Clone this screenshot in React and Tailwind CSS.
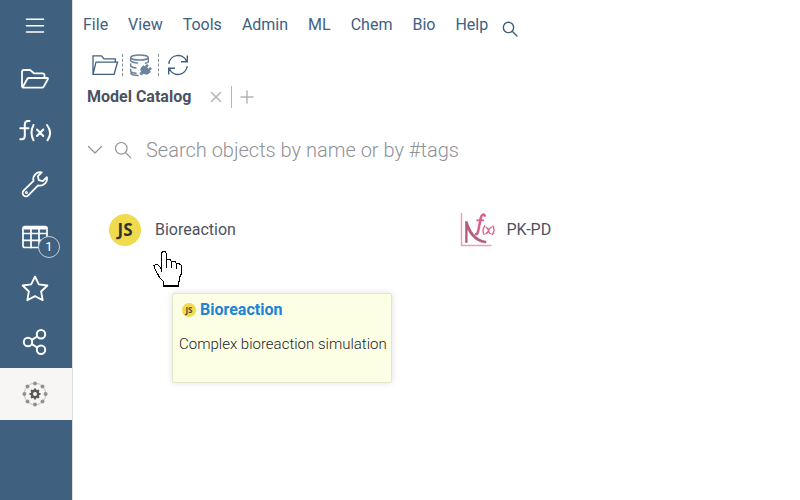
import React from 'react';

function Icon({ className, viewBox, children, strokeWidth = 1.8 }) {
  return (
    <svg
      className={className}
      viewBox={viewBox}
      fill="none"
      stroke="currentColor"
      strokeWidth={strokeWidth}
      strokeLinecap="round"
      strokeLinejoin="round"
      aria-hidden="true"
    >
      {children}
    </svg>
  );
}

function MenuLines() {
  return (
    <Icon className="h-5 w-5" viewBox="0 0 20 20" strokeWidth={1.6}>
      <path d="M1.5 3.3h17M1.5 9.7h17M1.5 16h17" />
    </Icon>
  );
}

function FolderSide() {
  return (
    <Icon className="h-6 w-8" viewBox="0 0 32 24">
      <path d="M3 19.5V5Q3 3 5 3h6l4 3.3h8.5q2 0 2 2V11M3.5 20.5 8.2 12Q8.8 11 10 11h18q1.5 0 .8 1.3L24.8 19.500Q24.2 20.7 23 20.7H4.5Q3 20.7 3 19" />
    </Icon>
  );
}

function FunctionIcon() {
  return (
    <Icon className="h-7 w-9" viewBox="0 0 36 28" strokeWidth={2}>
      <path d="M12.5 4h-1.5Q7.8 4 7.8 7.5v11.2Q7.8 22.3 4.5 22.3H3.2M3.2 11.2h8.3" />
      <path d="M16.5 8Q12.5 15.7 16.5 23.3M30 8Q36 15.7 30.5 23.3" />
      <path d="m20 12.5 6.3 6.5m0-6.500L20 19" />
    </Icon>
  );
}

function WrenchIcon() {
  return (
    <Icon className="h-7 w-7" viewBox="0 0 28 28">
      <path d="M20.800 2.300a7 7 0 0 0-8.300 8.600L2.600 20.600a3.300 3.300 0 0 0 4.700 4.700l9.800-9.900a7 7 0 0 0 8.700-8.300l-4 4-4-.9-.9-4z" />
      <circle cx="5.4" cy="22.6" r=".6" />
    </Icon>
  );
}

function TableIcon() {
  return (
    <Icon className="h-6 w-7" viewBox="0 0 28 24" strokeWidth={1.7}>
      <rect x="2" y="1.5" width="24" height="21" rx="2" />
      <path d="M2 8.5h24M2 15.3h24M10 4v18.5M18 4v18.5" />
      <path d="M3 3h22" strokeWidth="3" />
    </Icon>
  );
}

function StarIcon() {
  return (
    <Icon className="h-7 w-7" viewBox="0 0 28 28">
      <path d="m14 1.5 3.8 7.8 8.6 1.2-6.3 6 1.6 8.700L14 21.100l-7.700 4.100 1.600-8.700-6.300-6 8.600-1.200z" />
    </Icon>
  );
}

function ShareIcon() {
  return (
    <Icon className="h-7 w-7" viewBox="0 0 28 28" strokeWidth={2}>
      <circle cx="7" cy="14" r="4.2" />
      <circle cx="20" cy="6.2" r="4.2" />
      <circle cx="20" cy="21.8" r="4.2" />
      <path d="m10.800 11.800 5.400-3.300m-5.400 7.700 5.400 3.300" />
    </Icon>
  );
}

function HubIcon() {
  return (
    <svg className="h-7 w-7" viewBox="0 0 28 28" fill="none" aria-hidden="true">
      <circle cx="14" cy="14" r="10.8" stroke="#c2c2c2" strokeWidth="1" />
      <g fill="#929292">
        <circle cx="14" cy="3.4" r="2" />
        <circle cx="21.5" cy="6.5" r="2" />
        <circle cx="24.6" cy="14" r="2" />
        <circle cx="21.5" cy="21.5" r="2" />
        <circle cx="14" cy="24.6" r="2" />
        <circle cx="6.5" cy="21.5" r="2" />
        <circle cx="3.4" cy="14" r="2" />
        <circle cx="6.5" cy="6.5" r="2" />
      </g>
      <circle cx="14" cy="14" r="3.2" stroke="#595959" strokeWidth="2.4" />
      <path
        d="M14 8.500v2.200M14 17.300v2.200M8.500 14h2.200M17.300 14h2.200M10.100 10.100l1.600 1.600M16.300 16.300l1.600 1.600M10.100 17.900l1.600-1.600M16.300 11.700l1.600-1.600"
        stroke="#595959"
        strokeWidth="2.2"
      />
    </svg>
  );
}

function FolderTool() {
  return (
    <Icon className="h-6 w-7" viewBox="0 0 28 24" strokeWidth={1.3}>
      <path d="M2 21.300V2.800h8.500l2.500 3h11.300v3.400M2 21.300 5 9.200h21.500l-3.400 12.100z" strokeLinejoin="miter" />
    </Icon>
  );
}

function DatabaseTool() {
  return (
    <Icon className="h-6 w-6" viewBox="0 0 24 24" strokeWidth={1.5}>
      <g stroke="#6b849b">
        <ellipse cx="11.5" cy="4.5" rx="8.8" ry="2.6" />
        <path d="M2.700 4.500v3.300q1.800 2 6.800 2.200M20.300 4.500V9q-1 .8-2.800 1.200M2.700 11v2q1.200 1.600 5.300 1.900M2.700 16.300v2q1 1.600 5.300 1.900M2.700 20.300q1.600 2.200 7.300 2.200" />
      </g>
      <path
        d="m12 20.200 1.500-1.200q-1.800-3.500.8-5.200l1-1 1.500 1 2-2.300 1.500 1-1.500 2.200 1.500 1.300 2-1.500 1.200 1.200-2 2 .8 1.300q-2.800 3.500-6.700 1.500l-2.100 1.200z"
        fill="#6b849b"
        stroke="#6b849b"
        strokeWidth="1"
      />
    </Icon>
  );
}

function RefreshTool() {
  return (
    <Icon className="h-6 w-6" viewBox="0 0 24 24" strokeWidth={1.4}>
      <path
        d="M2.800 10.800A9.300 9.300 0 0 1 20.500 8M21.200 13.200A9.300 9.300 0 0 1 3.500 16M21.300 2.500v6.300h-6.300M2.700 21.500v-6.300H9"
        strokeLinecap="butt"
        strokeLinejoin="miter"
      />
    </Icon>
  );
}

function SearchGlyph({ className, strokeWidth }) {
  return (
    <Icon className={className} viewBox="0 0 18 18" strokeWidth={strokeWidth}>
      <circle cx="7.3" cy="7.3" r="5.8" />
      <path d="m11.5 11.5 5.3 5.3" />
    </Icon>
  );
}

function JsBadge({ large }) {
  return (
    <span
      className={
        large
          ? 'flex h-8 w-8 shrink-0 items-center justify-center rounded-full bg-[#f0db4f] font-["Open_Sans",sans-serif] text-[17px] font-bold text-[#323330]'
          : 'flex h-3.5 w-3.5 shrink-0 items-center justify-center rounded-full bg-[#f0db4f] font-["Open_Sans",sans-serif] text-[8px] font-bold text-[#4e4a30]'
      }
    >
      JS
    </span>
  );
}

function CurveIcon() {
  return (
    <svg className="h-9 w-9 shrink-0" viewBox="0 0 36 36" fill="none" aria-hidden="true">
      <path d="M2.500 1v32.500H32.500" stroke="#e2a5bb" strokeWidth="1.500" />
      <path d="M6.500 9.500 8.300 9.500C11 19 16.500 27.500 27 29.300V31C17.500 30.500 11.500 23.500 8.200 16.500V30.500H6.500z" fill="#b05a7c" stroke="#b05a7c" strokeWidth=".6" />
      <path d="M25.800 3.700c-.8-2-3.200-1.500-4 2L19.500 17.500c-.6 3.500-1.500 5-2.600 4.500" stroke="#dc5f89" strokeWidth="2.500" strokeLinecap="round" />
      <path d="M17.500 8.300h7.500" stroke="#dc5f89" strokeWidth="1.800" />
      <path d="M26 13.500q-3.500 4.800-.8 9.500M33.500 13.500q3.500 4.800-.5 9.500M26.800 15.300q2 0 2.600 3.200t2.900 3.200M32.800 15.300q-2.300 0-3.300 3.200t-3.200 3.200" stroke="#dc5f89" strokeWidth="1.300" />
    </svg>
  );
}

function HandPointer() {
  return (
    <svg className="absolute left-[80px] top-[249px] h-[38px] w-[30px]" viewBox="0 0 30 38" shapeRendering="crispEdges" aria-hidden="true">
      <path
        d="M8.500 22.500V4.500L9.500 2.500H12L13.500 4.500V11.500L15 10.500H17L18.500 12.500H22L23.500 14.500H26L28.500 16.500V24.500L26.500 28.500V31.500L25.500 33.500V36.500H10.500V32.500L6.500 28.500L4.500 24.500L1.500 19.500L1 16.500L2.500 15.500H4.500L6.500 17.500L8.500 20.500"
        fill="#fff"
        stroke="#000"
        strokeWidth="1"
      />
      <path d="M13.500 11v8M18.500 12v7M23.500 14v6" stroke="#000" />
      <path d="M10 37h16" stroke="#000" strokeWidth="2" />
    </svg>
  );
}

const sideItems = [
  ['Toggle menu', MenuLines],
  ['Browse files', FolderSide],
  ['Functions', FunctionIcon],
  ['Tools', WrenchIcon],
  ['Tables', TableIcon],
  ['Favorites', StarIcon],
  ['Share', ShareIcon],
];

const menus = ['File', 'View', 'Tools', 'Admin', 'ML', 'Chem', 'Bio', 'Help'];

export default function App() {
  return (
    <div className="flex min-h-screen bg-white font-[Roboto,sans-serif] text-base text-[#4d5261]">
      <nav aria-label="Sidebar" className="w-[73px] shrink-0 border-r border-[#dbdcdf] bg-[#40607f] text-white">
        <div className="grid h-[368px] grid-rows-7">
          {sideItems.map(([label, Glyph]) => (
            <button key={label} aria-label={label} className="relative flex items-center justify-center pr-[3px]">
              <Glyph />
              {label === 'Tables' && (
                <span className="absolute bottom-[5px] left-[38px] flex h-[22px] w-[22px] items-center justify-center rounded-full border border-[#c5d0da] bg-[#40607f] text-[13px]">
                  1
                </span>
              )}
            </button>
          ))}
        </div>
        <button aria-label="Platform" aria-pressed="true" className="flex h-[52px] w-full items-center justify-center bg-[#f7f6f4] pr-0.5">
          <HubIcon />
        </button>
      </nav>

      <main className="relative min-w-0 flex-1">
        <header className="flex h-[49px] items-center gap-5 pl-2.5 pt-px text-[#40607f]">
          {menus.map((name) => (
            <button key={name}>{name}</button>
          ))}
          <button aria-label="Search" className="-ml-1.5 pt-2">
            <SearchGlyph className="h-4 w-4" strokeWidth={1.6} />
          </button>
        </header>

        <div role="toolbar" aria-label="Actions" className="flex h-8 items-center pl-[18px] text-[#40607f]">
          <button aria-label="Open" className="pr-[3px]">
            <FolderTool />
          </button>
          <span className="h-[22px] border-l border-dashed border-[#878d94]" />
          <button aria-label="Connect database" className="px-[5px]">
            <DatabaseTool />
          </button>
          <span className="ml-px h-[22px] border-l border-dashed border-[#878d94]" />
          <button aria-label="Refresh" className="pl-[7px]">
            <RefreshTool />
          </button>
        </div>

        <div className="flex h-8 items-center pl-3.5">
          <button className="font-bold">Model Catalog</button>
          <button aria-label="Close tab" className="ml-[18px] text-[#b4b6bc]">
            <Icon className="h-3.5 w-3.5" viewBox="0 0 14 14" strokeWidth={1.5}>
              <path d="m2.500 2.500 9 9m0-9-9 9" />
            </Icon>
          </button>
          <span className="ml-2 h-[22px] border-l border-[#b4b6bc]" />
          <button aria-label="New tab" className="ml-2 text-[#b4b6bc]">
            <Icon className="h-3.5 w-3.5" viewBox="0 0 14 14" strokeWidth={1.5}>
              <path d="M7 1v12M1 7h12" />
            </Icon>
          </button>
        </div>

        <div className="mt-[19px] flex h-9 items-center pl-3.5 text-[#8f9297]">
          <button aria-label="Expand search">
            <Icon className="h-4 w-4" viewBox="0 0 16 16" strokeWidth={1.2}>
              <path d="m1.500 4.500 6.500 6.500L14.500 4.500" />
            </Icon>
          </button>
          <SearchGlyph className="ml-[11px] h-[18px] w-[18px] shrink-0" strokeWidth={1.2} />
          <input
            aria-label="Search objects"
            placeholder="Search objects by name or by #tags"
            className="ml-3.5 min-w-0 flex-1 bg-transparent text-xl font-light outline-none placeholder:text-[#8f9297]"
          />
        </div>

        <div className="mt-11 grid grid-cols-2 gap-x-2 pl-9">
          <a href="#bioreaction" className="flex h-9 items-center gap-3.5">
            <JsBadge large />
            Bioreaction
          </a>
          <a href="#pk-pd" className="flex h-9 items-center gap-3">
            <CurveIcon />
            PK-PD
          </a>
        </div>

        <HandPointer />

        <div
          role="tooltip"
          className="absolute left-[99px] top-[293px] h-[90px] w-[220px] rounded-xs border border-[#e2e6ca] bg-[#fdffe5] px-1.5 pt-1 shadow-[0_0_6px_rgba(0,0,0,0.12)]"
        >
          <div className="flex items-center gap-1 pl-[3px] font-bold text-[#2083d5]">
            <JsBadge />
            Bioreaction
          </div>
          <p className="mt-[11px] whitespace-nowrap text-[15px] font-light text-[#232428]">Complex bioreaction simulation</p>
        </div>
      </main>
    </div>
  );
}
